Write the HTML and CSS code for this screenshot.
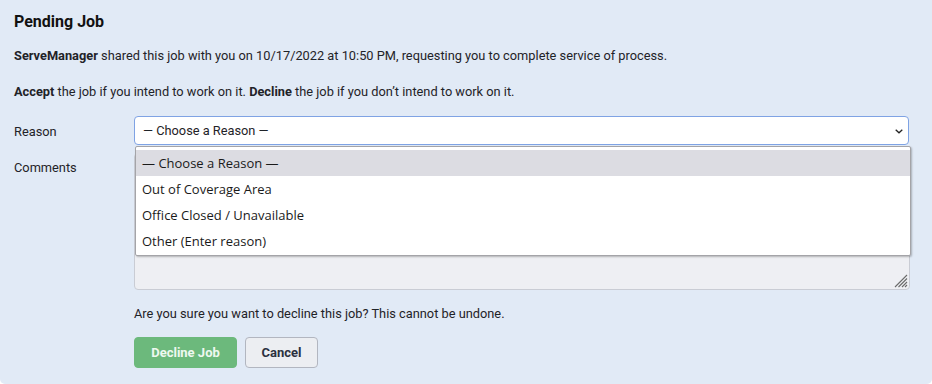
FILE: index.html
```html
<!DOCTYPE html>
<html lang="en">
<head>
    <meta charset="UTF-8">
    <meta name="viewport" content="width=device-width, initial-scale=1.0">
    <title>Pending Job</title>
    <link rel="stylesheet" href="styles.css">
</head>
<body>
    <div class="card">
        <h2 class="title">Pending Job</h2>
        <p class="intro"><b>ServeManager</b> shared this job with you on 10/17/2022 at 10:50 PM, requesting you to complete service of process.</p>
        <p class="intro"><b>Accept</b> the job if you intend to work on it. <b>Decline</b> the job if you don’t intend to work on it.</p>

        <div class="form-row">
            <label class="form-label">Reason</label>
            <div class="select-wrap">
                <div class="select-box">
                    <span>— Choose a Reason —</span>
                    <svg class="chevron" width="8" height="5" viewBox="0 0 8 5"><path d="M0.7 0.8l3.3 3 3.3-3" fill="none" stroke="#222" stroke-width="1.3"/></svg>
                </div>
                <ul class="select-menu">
                    <li class="active">— Choose a Reason —</li>
                    <li>Out of Coverage Area</li>
                    <li>Office Closed / Unavailable</li>
                    <li>Other (Enter reason)</li>
                </ul>
            </div>
        </div>

        <div class="form-row comments">
            <label class="form-label">Comments</label>
            <div class="comment-wrap">
                <textarea class="comment-box"></textarea>
                <svg class="grip" width="14" height="14" viewBox="0 0 14 14">
                    <path d="M13 1L1 13M13 4.5L4.5 13M13 8L8 13M13 11L11 13" stroke="#6b6b6b" stroke-width="1.1"/>
                </svg>
            </div>
        </div>

        <div class="confirm">
            <p>Are you sure you want to decline this job? This cannot be undone.</p>
            <div class="button-row">
                <button class="btn btn-decline">Decline Job</button>
                <button class="btn btn-cancel">Cancel</button>
            </div>
        </div>
    </div>
</body>
</html>
```

FILE: styles.css
```css
body {
    margin: 0;
    background: #ffffff;
    font-family: Roboto, "Liberation Sans", sans-serif;
    color: #1f2328;
    font-size: 12.8px;
}
.card {
    background-color: #e1eaf6;
    height: 384px;
    box-sizing: border-box;
    padding: 12px 14px 0 14px;
    border-radius: 0 0 5px 5px;
}
.title {
    font-size: 16px;
    line-height: 20px;
    font-weight: 700;
    margin: 0 0 15px 0;
    color: #111;
}
.intro {
    margin: 0 0 18px 0;
    line-height: 18px;
}
.intro + .intro {
    margin-bottom: 15px;
}
.intro b {
    font-weight: 700;
}
.form-row {
    display: flex;
    align-items: flex-start;
}
.form-label {
    width: 120px;
    flex-shrink: 0;
    line-height: 18px;
    padding-top: 7px;
}
.select-wrap {
    position: relative;
    width: 775px;
}
.select-box {
    height: 29px;
    box-sizing: border-box;
    background: #ffffff;
    border: 1px solid #7fa3e4;
    border-radius: 4px;
    display: flex;
    align-items: center;
    justify-content: space-between;
    padding: 0 5px 0 8px;
}
.chevron {
    margin-top: 2px;
}
.select-menu {
    position: absolute;
    top: 30px;
    left: 1px;
    width: 776px;
    box-sizing: border-box;
    margin: 0;
    padding: 3px 0 1px 0;
    list-style-type: none;
    background: #ffffff;
    border: 1px solid #a4a4a8;
    border-radius: 2px;
    box-shadow: 1px 1px 2px rgba(0, 0, 0, 0.25);
    font-family: "Open Sans", "Noto Sans", sans-serif;
    font-size: 13px;
    color: #1a1a1a;
    z-index: 2;
}
.select-menu li {
    height: 26px;
    line-height: 26px;
    padding-left: 6px;
}
.select-menu li.active {
    background-color: #dcdce2;
}
.comments {
    margin-top: 8px;
}
.comments .form-label {
    padding-top: 6px;
}
.comment-wrap {
    position: relative;
    width: 776px;
    height: 137px;
}
.comment-box {
    display: block;
    width: 100%;
    height: 100%;
    box-sizing: border-box;
    margin: 0;
    background: #eeeff3;
    border: 1px solid #c9ccd4;
    border-radius: 4px;
    resize: none;
}
.grip {
    position: absolute;
    right: 2px;
    bottom: 2px;
}
.confirm {
    margin-left: 120px;
    margin-top: 15px;
}
.confirm p {
    margin: 0 0 14px 0;
    line-height: 18px;
}
.button-row {
    display: flex;
    gap: 8px;
}
.btn {
    height: 31px;
    box-sizing: border-box;
    border-radius: 4px;
    font-family: Roboto, "Liberation Sans", sans-serif;
    font-size: 13px;
    font-weight: 700;
    cursor: pointer;
}
.btn-decline {
    width: 103px;
    background-color: #6cb97c;
    border: 1px solid #6cb97c;
    color: #eef8f0;
}
.btn-cancel {
    width: 73px;
    background-color: #eceef2;
    border: 1px solid #b2b6c0;
    color: #2b3140;
}
```
